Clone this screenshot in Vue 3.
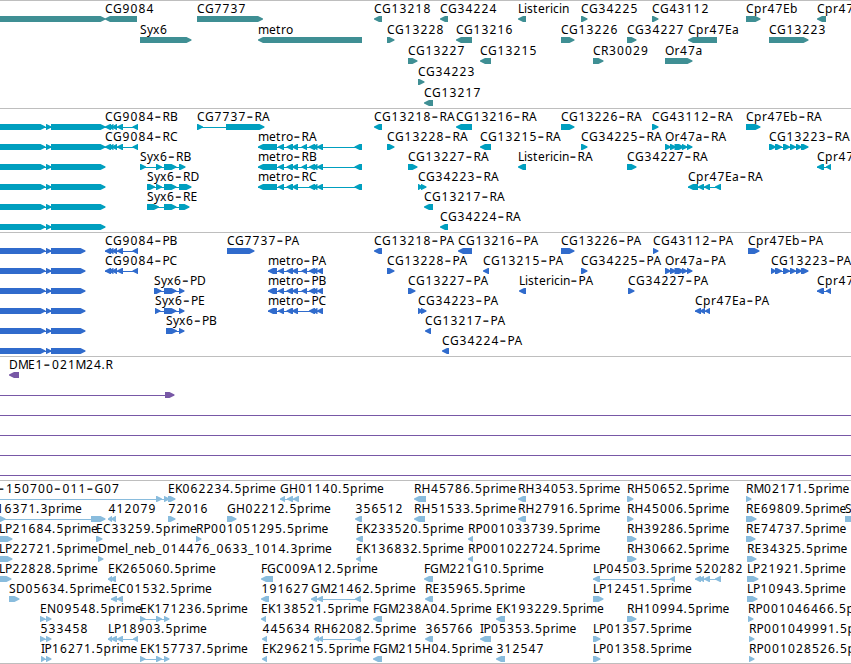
<script setup>
// label, direction, then blocks as [start, end]
const geneBlocks = [[105, 111], [109, 113.5], [112, 117], [117, 123], [132.5, 138]];
const metroTail = [[309, 315], [312, 317.5], [317, 323]];
const or47a = [[665, 671], [670, 676], [674.5, 684], [682, 687.5], [687, 692.5]];

const tracks = [
  {
    name: "genes",
    color: "#3f8f94",
    height: 108,
    pitch: 21,
    rows: [
      [
        ["", ">", [-9, 105.5]],
        ["CG9084", "<", [105, 137]],
        ["CG7737", ">", [197, 263]],
        ["CG13218", "<", [374, 382]],
        ["CG34224", "<", [440, 448]],
        ["Listericin", "<", [518, 526]],
        ["CG34225", ">", [581, 587.5]],
        ["CG43112", ">", [652, 658.5]],
        ["Cpr47Eb", ">", [746, 760.5]],
        ["Cpr47Ec", "<", [817, 826]],
      ],
      [
        ["Syx6", ">", [140, 191.5]],
        ["metro", "<", [258, 362]],
        ["CG13228", ">", [387, 394.5]],
        ["CG13216", "<", [456, 472]],
        ["CG13226", ">", [561, 574.5]],
        ["CG34227", ">", [627, 636.5]],
        ["Cpr47Ea", "<", [688, 717]],
        ["CG13223", ">", [769, 808.5]],
      ],
      [
        ["CG13227", ">", [408, 417.5]],
        ["CG13215", "<", [480, 491]],
        ["CR30029", ">", [593, 603.5]],
        ["Or47a", ">", [665, 692.5]],
      ],
      [["CG34223", ">", [418, 424.5]]],
      [["CG13217", "<", [424, 433]]],
    ],
  },
  {
    name: "transcripts",
    color: "#009fbf",
    height: 124,
    pitch: 20,
    lead: [[-9, 45.5], [46, 51.5], [51, 105.5]],
    rows: [
      [
        ["CG9084-RB", "<", ...geneBlocks],
        ["CG7737-RA", ">", [197, 203], [226, 264.5]],
        ["CG13218-RA", "<", [374, 382]],
        ["CG13216-RA", "<", [456, 472]],
        ["CG13226-RA", ">", [561, 574.5]],
        ["CG43112-RA", ">", [652, 658.5]],
        ["Cpr47Eb-RA", ">", [746, 760.5]],
      ],
      [
        ["CG9084-RC", "<", ...geneBlocks],
        ["metro-RA", "<", [258, 277], [278, 284], [286.5, 293], [292, 298], [301.5, 307], ...metroTail, [354.5, 362]],
        ["CG13228-RA", ">", [387, 394.5]],
        ["CG13215-RA", "<", [480, 491]],
        ["CG34225-RA", ">", [581, 587.5]],
        ["Or47a-RA", ">", ...or47a],
        ["CG13223-RA", ">", [769, 776], [775, 782], [783, 790], [790, 796], [796, 802], [801, 808.5]],
      ],
      [
        ["Syx6-RB", ">", [140, 146], [156, 162], [164, 176.5], [179, 185.5]],
        ["metro-RB", "<", [258, 277], [278, 284], [286.5, 293], [292, 298], [301.5, 307], ...metroTail, [354.5, 362]],
        ["CG13227-RA", ">", [408, 417.5]],
        ["Listericin-RA", "<", [518, 526]],
        ["CG34227-RA", ">", [627, 636.5]],
        ["Cpr47Ec-RA", "<", [817, 824], [826, 831]],
      ],
      [
        ["Syx6-RD", ">", [147, 155], [156, 162], [164, 176.5], [179, 191.5]],
        ["metro-RC", "<", [258, 277], [278, 284], [286.5, 293], [292, 298], ...metroTail, [354.5, 362]],
        ["CG34223-RA", ">", [418, 423], [421, 426.5]],
        ["Cpr47Ea-RA", "<", [688, 698], [698, 704], [704, 710], [715, 721]],
      ],
      [
        ["Syx6-RE", ">", [147, 159], [164, 176.5], [179, 189.5]],
        ["CG13217-RA", "<", [424, 433]],
      ],
      [["CG34224-RA", "<", [440, 448]]],
    ],
  },
  {
    name: "proteins",
    color: "#306bcc",
    height: 124,
    pitch: 20,
    lead: [[-9, 45.5], [46, 51.5], [51, 85.5]],
    rows: [
      [
        ["CG9084-PB", "<", ...geneBlocks],
        ["CG7737-PA", ">", [227, 254.5]],
        ["CG13218-PA", "<", [374, 382]],
        ["CG13216-PA", "<", [458, 472]],
        ["CG13226-PA", ">", [561, 574.5]],
        ["CG43112-PA", ">", [653, 658.5]],
        ["Cpr47Eb-PA", ">", [748, 759.5]],
      ],
      [
        ["CG9084-PC", "<", ...geneBlocks],
        ["metro-PA", "<", [268, 277], [278, 284], [286.5, 293], [292, 298], [301.5, 307], ...metroTail],
        ["CG13228-PA", ">", [387, 394.5]],
        ["CG13215-PA", "<", [483, 489]],
        ["CG34225-PA", ">", [581, 587.5]],
        ["Or47a-PA", ">", ...or47a],
        ["CG13223-PA", ">", [771, 776], [775, 782], [783, 790], [790, 796], [796, 802], [801, 808.5]],
      ],
      [
        ["Syx6-PD", ">", [154, 161.5], [164, 176.5], [179, 184.5]],
        ["metro-PB", "<", [268, 277], [278, 284], [286.5, 293], [292, 298], [301.5, 307], ...metroTail],
        ["CG13227-PA", ">", [408, 415.5]],
        ["Listericin-PA", "<", [519, 526]],
        ["CG34227-PA", ">", [628, 634.5]],
        ["Cpr47Ec-PA", "<", [817, 824], [826, 831]],
      ],
      [
        ["Syx6-PE", ">", [155, 160.5], [164, 176.5], [179, 184.5]],
        ["metro-PC", "<", [268, 277], [278, 284], [286.5, 293], [292, 298], ...metroTail],
        ["CG34223-PA", ">", [418, 423], [421, 426.5]],
        ["Cpr47Ea-PA", "<", [695, 701], [700, 705], [705, 710]],
      ],
      [
        ["Syx6-PB", ">", [166, 177], [179, 184.5]],
        ["CG13217-PA", "<", [425, 431]],
      ],
      [["CG34224-PA", "<", [442, 449]]],
    ],
  },
  {
    name: "clones",
    color: "#7858a6",
    height: 124,
    pitch: 20,
    rows: [
      [["DME1-021M24.R", "<", [9, 19]]],
      [["", ">", [-9, -3], [165, 174.5]]],
      [["", ">", [-9, -3], [860, 866]]],
      [["", ">", [-9, -3], [860, 866]]],
      [["", ">", [-9, -3], [860, 866]]],
      [["", ">", [-9, -3], [860, 866]]],
    ],
  },
  {
    name: "ests",
    color: "#89bcdd",
    height: 184,
    pitch: 20,
    rows: [
      [
        ["-150700-011-G07", ">", [-3, -2], [156, 162], [164, 169.5], [168, 175.5]],
        ["EK062234.5prime", ">"],
        ["GH01140.5prime", "<", [280, 285], [287, 293], [293, 299]],
        ["RH45786.5prime", "<", [414, 426]],
        ["RH34053.5prime", "<", [518, 526]],
        ["RH50652.5prime", ">", [627, 633.5]],
        ["RM02171.5prime", ">", [746, 751.5]],
      ],
      [
        ["16371.3prime", ">", [-4, 5.5], [91, 105.5]],
        ["412079", "<", [108, 112], [111, 116]],
        ["72016", ">", [168, 175.5]],
        ["GH02212.5prime", ">", [227, 236.5]],
        ["356512", "<", [355, 362]],
        ["RH51533.5prime", "<", [414, 425]],
        ["RH27916.5prime", "<", [518, 526]],
        ["RH45006.5prime", ">", [627, 633.5]],
        ["RE69809.5prime", ">", [746, 756.5]],
        ["S", ">", [845, 856]],
      ],
      [
        ["LP21684.5prime", ">", [-1, 12.5]],
        ["EC33259.5prime", ">", [96, 102.5]],
        ["RP001051295.5prime", ">", [196, 201.5]],
        ["EK233520.5prime", "<", [356, 363]],
        ["RP001033739.5prime", "<", [468, 473]],
        ["RH39286.5prime", ">", [627, 636.5]],
        ["RE74737.5prime", ">", [746, 755.5]],
      ],
      [
        ["LP22721.5prime", ">", [-1, 12.5]],
        ["Dmel_neb_014476_0633_1014.3prime", ">", [98, 103.5]],
        ["EK136832.5prime", "<", [356, 361]],
        ["RP001022724.5prime", "<", [468, 473]],
        ["RH30662.5prime", ">", [627, 636.5]],
        ["RE34325.5prime", ">", [747, 756.5]],
      ],
      [
        ["LP22828.5prime", ">", [-1, 11.5]],
        ["EK265060.5prime", "<", [108, 112], [110, 116]],
        ["FGC009A12.5prime", "<", [261, 273]],
        ["FGM221G10.5prime", "<", [424, 433]],
        ["LP04503.5prime", "<", [593, 600], [670, 675]],
        ["520282", "<", [695, 701], [699, 704], [704, 710], [715, 721]],
        ["LP21921.5prime", ">", [747, 758.5]],
      ],
      [
        ["SD05634.5prime", ">", [9, 19.5]],
        ["EC01532.5prime", "<", [111, 117], [117, 123]],
        ["191627", "<", [261, 269]],
        ["GM21462.5prime", "<", [311, 317], [317, 323], [355, 361]],
        ["RE35965.5prime", "<", [425, 433]],
        ["LP12451.5prime", ">", [593, 603.5]],
        ["LP10943.5prime", ">", [747, 757.5]],
      ],
      [
        ["EN09548.5prime", ">", [40, 45.5], [46, 51.5]],
        ["EK171236.5prime", ">", [140, 145.5], [156, 162], [164, 169.5]],
        ["EK138521.5prime", "<", [261, 266]],
        ["FGM238A04.5prime", "<", [373, 382]],
        ["EK193229.5prime", "<", [496, 505]],
        ["RH10994.5prime", ">", [627, 636.5]],
        ["RP001046466.5prime", ">", [748, 753.5]],
      ],
      [
        ["533458", ">", [40, 45.5], [46, 51.5]],
        ["LP18903.5prime", "<", [108, 112], [111, 117], [117, 123], [133, 138]],
        ["445634", "<", [262, 267]],
        ["RH62082.5prime", "<", [314, 319], [318, 323], [355, 361]],
        ["365766", "<", [425, 433]],
        ["IP05353.5prime", "<", [480, 491]],
        ["LP01357.5prime", ">", [593, 600.5]],
        ["RP001049991.5prime", ">", [749, 754.5]],
      ],
      [
        ["IP16271.5prime", ">", [41, 45.5], [46, 51.5]],
        ["EK157737.5prime", ">", [140, 145.5], [156, 162], [164, 169.5]],
        ["EK296215.5prime", "<", [262, 267]],
        ["FGM215H04.5prime", "<", [373, 382]],
        ["312547", "<", [496, 505]],
        ["LP01358.5prime", ">", [593, 600.5]],
        ["RP001028526.5prime", ">", [749, 754.5]],
      ],
    ],
  },
];

const advances = {
  C: 8, G: 9, "-": 8.5, R: 7.5, A: 8, B: 7, S: 7, y: 6, x: 6.5, m: 11, e: 7, t: 5,
  r: 5, o: 7, p: 8, E: 7, b: 8, a: 7, c: 6, O: 9.5, L: 6, P: 7, i: 3, s: 6, n: 7,
  K: 7, H: 9, M: 10, D: 9, N: 9, I: 3.5, F: 6, ".": 4, l: 3, _: 6,
};

// splits a label at its hyphens, which are set wider than the rest
function labelParts(text, start) {
  let x = start;
  return text.split(/(-)/).filter(Boolean).map((part) => {
    const xs = [...part].map((ch) => {
      const at = x;
      x += advances[ch] ?? 8;
      return /[\d-]/.test(ch) ? at + 0.5 : at;
    });
    return { text: part, x: xs.join(" "), dash: part === "-" };
  });
}

function labelStart(item) {
  return item[2] ? item[2][0] : 168;
}

function blocks(item) {
  return item.slice(2);
}

function arrow(dir, [x1, x2], y) {
  const head = Math.min(5.5, x2 - x1);
  if (dir === ">") {
    const neck = x2 - head;
    return `M${x1} ${y}H${neck + 0.5}L${x2} ${y + 2.5}V${y + 3.5}L${neck + 0.5} ${y + 6}H${x1}Z`;
  }
  const neck = x1 + head;
  return `M${x2} ${y}H${neck - 0.5}L${x1} ${y + 2.5}V${y + 3.5}L${neck - 0.5} ${y + 6}H${x2}Z`;
}

function rowItems(track, row) {
  return track.lead ? [["", ">", ...track.lead], ...row] : row;
}
</script>

<template>
  <div class="browser">
    <div
      v-for="track in tracks"
      :key="track.name"
      class="track"
      :class="track.name"
    >
      <svg width="851" :height="track.height - 1" :viewBox="`0 1 851 ${track.height - 1}`">
        <g v-for="(row, r) in track.rows" :key="r" :fill="track.color">
          <g v-for="(item, i) in rowItems(track, row)" :key="i">
            <rect
              v-if="blocks(item).length > 1"
              :x="item[2][0]"
              :y="19 + r * track.pitch"
              :width="item[item.length - 1][1] - item[2][0] - 1"
              height="1"
            />
            <path
              v-for="(block, b) in blocks(item)"
              :key="b"
              :d="arrow(item[1], block, 16 + r * track.pitch)"
            />
            <text v-if="item[0]"><tspan
              v-for="(part, p) in labelParts(item[0], labelStart(item))"
              :key="p"
              :class="{ dash: part.dash }"
              :x="part.x"
              :y="(part.dash ? 14.5 : 13) + r * track.pitch"
            >{{ part.text }}</tspan></text>
          </g>
        </g>
      </svg>
    </div>
  </div>
</template>

<style>
body {
  margin: 0;
  background: #fff;
}
</style>

<style scoped>
.browser {
  display: flex;
  flex-direction: column;
  width: 851px;
  height: 664px;
  overflow: hidden;
  box-sizing: border-box;
  border-bottom: 1px solid #bebebe;
}

.track {
  flex: none;
  border-top: 1px solid #bebebe;
}

.track.ests {
  height: 182px;
  overflow: hidden;
}

.track svg {
  display: block;
}

text {
  font-family: "Noto Sans", "DejaVu Sans", sans-serif;
  font-size: 12px;
  fill: #000;
}

.dash {
  font-family: "Liberation Sans", sans-serif;
  font-size: 20px;
  fill: #333;
}
</style>
